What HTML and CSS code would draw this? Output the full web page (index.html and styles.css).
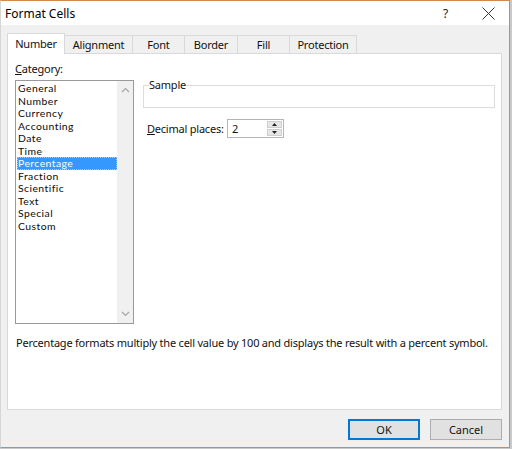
FILE: index.html
```html
<!DOCTYPE html>
<html>
<head>
<meta charset="utf-8">
<link rel="stylesheet" href="styles.css">
</head>
<body>
<div class="dialog">
  <div class="titlebar">
    <span class="title">Format Cells</span>
    <span class="help">?</span>
    <span class="close">
      <svg width="13" height="13" viewBox="0 0 13 13"><path d="M0.5 0.5 L12.5 12.5 M12.5 0.5 L0.5 12.5" stroke="#333" stroke-width="1" fill="none"/></svg>
    </span>
  </div>
  <div class="body">
    <div class="tabs">
      <div class="tab active">Number</div>
      <div class="tab">Alignment</div>
      <div class="tab">Font</div>
      <div class="tab">Border</div>
      <div class="tab">Fill</div>
      <div class="tab">Protection</div>
    </div>
    <div class="panel">
      <div class="main">
        <div class="leftcol">
          <div class="label"><u>C</u>ategory:</div>
          <div class="listbox">
            <ul class="items">
              <li>General</li>
              <li>Number</li>
              <li>Currency</li>
              <li>Accounting</li>
              <li>Date</li>
              <li>Time</li>
              <li class="selected">Percentage</li>
              <li>Fraction</li>
              <li>Scientific</li>
              <li>Text</li>
              <li>Special</li>
              <li>Custom</li>
            </ul>
            <div class="scrollbar">
              <svg width="9" height="6" viewBox="0 0 9 6"><path d="M1 5 L4.5 1.5 L8 5" stroke="#a6a6a6" stroke-width="1.2" fill="none"/></svg>
              <svg width="9" height="6" viewBox="0 0 9 6"><path d="M1 1 L4.5 4.5 L8 1" stroke="#a6a6a6" stroke-width="1.2" fill="none"/></svg>
            </div>
          </div>
        </div>
        <div class="rightcol">
          <fieldset class="sample">
            <legend>Sample</legend>
          </fieldset>
          <div class="decimal">
            <span class="dlabel"><u>D</u>ecimal places:</span>
            <div class="spin">
              <span class="val">2</span>
              <div class="spinbtns">
                <div class="sb"><svg width="5" height="3" viewBox="0 0 5 3"><path d="M0 3 L2.5 0 L5 3 Z" fill="#222"/></svg></div>
                <div class="sb"><svg width="5" height="3" viewBox="0 0 5 3"><path d="M0 0 L2.5 3 L5 0 Z" fill="#222"/></svg></div>
              </div>
            </div>
          </div>
        </div>
      </div>
      <p class="desc">Percentage formats multiply the cell value by 100 and displays the result with a percent symbol.</p>
    </div>
    <div class="buttons">
      <button class="btn ok">OK</button>
      <button class="btn">Cancel</button>
    </div>
  </div>
</div>
</body>
</html>
```

FILE: styles.css
```css
html, body {
  margin: 0;
  padding: 0;
}
body {
  width: 512px;
  height: 449px;
  background: #c9c9c9;
  font-family: "Noto Sans", "Open Sans", sans-serif;
  font-size: 11px;
  letter-spacing: -0.22px;
  color: #111;
  overflow: hidden;
}
.dialog {
  width: 508px;
  height: 446px;
  border: 1px solid #d08a50;
  border-left-color: #d6d6d6;
  background: #f0f0f0;
  display: flex;
  flex-direction: column;
}
.titlebar {
  height: 24px;
  background: #fff;
  display: flex;
  align-items: center;
  flex-shrink: 0;
}
.title {
  font-size: 12px;
  letter-spacing: 0;
  margin-left: 4px;
  flex: 1;
  color: #000;
}
.help {
  font-size: 12px;
  margin-right: 34px;
  color: #222;
}
.close {
  display: flex;
  margin-right: 14px;
}
.body {
  flex: 1;
  padding: 8px 7px 0 6px;
  display: flex;
  flex-direction: column;
}
.tabs {
  display: flex;
  align-items: flex-end;
  height: 20px;
  position: relative;
  z-index: 1;
}
.tab {
  height: 17px;
  line-height: 17px;
  border: 1px solid #d9d9d9;
  border-bottom: none;
  border-left: none;
  background: #f0f0f0;
  text-align: center;
  color: #111;
}
.tab:nth-child(2) { width: 67px; }
.tab:nth-child(3) { width: 51px; }
.tab:nth-child(4) { width: 52px; }
.tab:nth-child(5) { width: 51px; }
.tab:nth-child(6) { width: 66px; }
.tab.active {
  width: 56px;
  height: 20px;
  line-height: 19px;
  background: #fff;
  border-left: 1px solid #d9d9d9;
  margin-bottom: -1px;
}
.panel {
  height: 355px;
  background: #fff;
  border: 1px solid #d9d9d9;
  display: flex;
  flex-direction: column;
  padding: 0 6px 0 7px;
}
.main {
  display: flex;
  gap: 9px;
}
.leftcol {
  width: 119px;
  padding-top: 9px;
}
.label {
  height: 17px;
  line-height: 12px;
}
.listbox {
  height: 242px;
  border: 1px solid #9a9a9a;
  display: flex;
}
.items {
  list-style: none;
  margin: 0;
  padding: 1px 0 0 1px;
  flex: 1;
  font-family: "Lato", "Noto Sans", sans-serif;
  font-size: 10.4px;
  letter-spacing: 0.45px;
  color: #0a0a0a;
}
.items li {
  height: 12.55px;
  line-height: 12.55px;
  padding-left: 1px;
}
.items li.selected {
  background: #3399ff;
  color: #fff;
  outline: 1px dotted #9cc9ff;
  outline-offset: -1px;
}
.scrollbar {
  width: 16px;
  background: #f0f0f0;
  display: flex;
  flex-direction: column;
  justify-content: space-between;
  align-items: center;
  padding: 6px 0 6px;
}
.rightcol {
  flex: 1;
  padding-top: 25px;
}
.sample {
  margin: 0;
  height: 29px;
  padding: 0;
  border: 1px solid #dcdcdc;
  box-sizing: border-box;
}
.sample legend {
  padding: 0;
  margin-left: 5px;
  line-height: 12px;
}
.decimal {
  display: flex;
  align-items: center;
  margin-top: 11px;
  margin-left: 4px;
}
.dlabel {
  width: 80px;
}
.spin {
  width: 55px;
  height: 17px;
  border: 1px solid #b5b5b5;
  display: flex;
  align-items: center;
}
.val {
  flex: 1;
  padding-left: 4px;
}
.spinbtns {
  width: 15px;
  height: 15px;
  margin-right: 1px;
  display: flex;
  flex-direction: column;
  gap: 1px;
}
.sb {
  flex: 1;
  background: #e6e6e6;
  border: 1px solid #cfcfcf;
  display: flex;
  align-items: center;
  justify-content: center;
}
.desc {
  margin: 12px 0 0 1px;
  line-height: 14px;
  white-space: nowrap;
}
.buttons {
  display: flex;
  justify-content: flex-end;
  gap: 10px;
  margin-top: 9px;
}
.btn {
  width: 72px;
  height: 21px;
  font-family: "Noto Sans", "Open Sans", sans-serif;
  font-size: 11px;
  color: #111;
  background: #e1e1e1;
  border: 1px solid #adadad;
  padding: 0;
}
.btn.ok {
  border: 2px solid #0078d7;
}
```
